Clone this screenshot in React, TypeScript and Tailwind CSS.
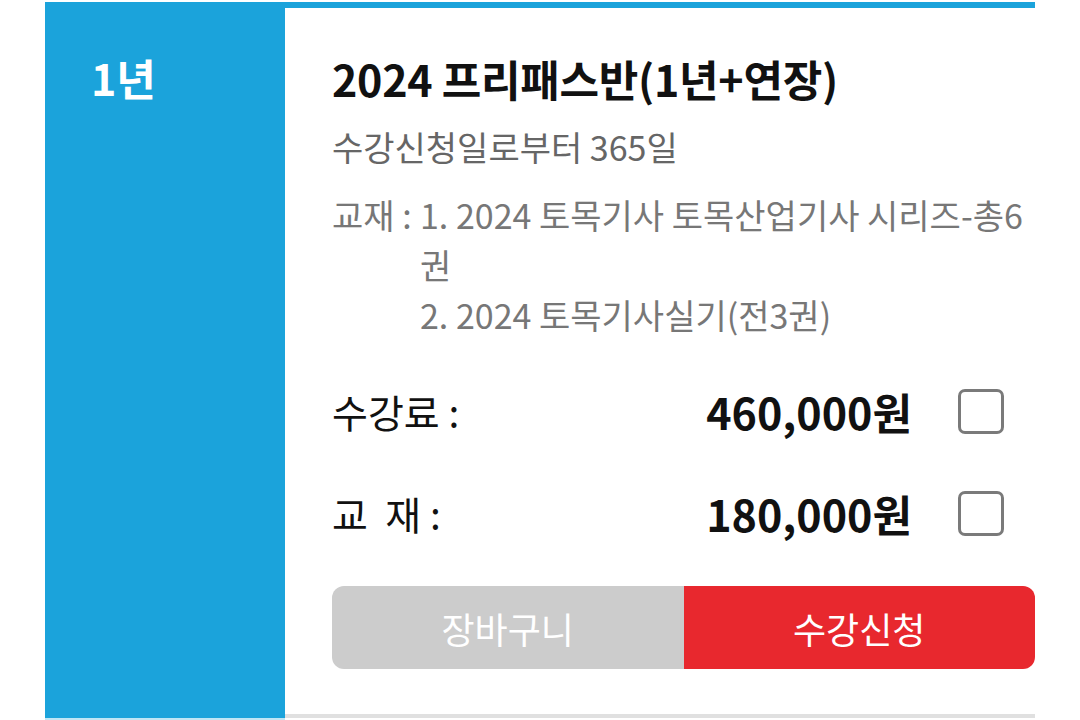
export default function App() {
  const font = { fontFamily: '"Noto Sans CJK KR", "Noto Sans", sans-serif' };
  return (
    <div className="w-[1080px] h-[720px] bg-white overflow-hidden" style={font}>
      <div className="pt-[2px] pl-[45px]">
        {/* course option */}
        <div className="flex w-[990px] border-t-[6px] border-[#1ba3db]">
          <div className="w-[240px] shrink-0 bg-[#1ba3db] pl-[46px] pt-[43px]">
            <span className="text-[43px] font-bold leading-[52px] text-white">1년</span>
          </div>
          <div className="flex-1 border-b-4 border-[#e0e0e0] pl-[47px] pt-[44px] pb-[45px]">
            <h2 className="text-[43px] font-bold leading-[52px] text-[#111] tracking-[-0.3px]">
              2024 프리패스반(1년+연장)
            </h2>
            <p className="mt-[21px] text-[34px] leading-[44px] text-[#666]">수강신청일로부터 365일</p>
            <div className="mt-[21px] flex text-[34px] leading-[50px] text-[#777]">
              <span className="w-[88px] shrink-0">교재 :</span>
              <div>
                <p>1. 2024 토목기사 토목산업기사 시리즈-총6</p>
                <p>권</p>
                <p>2. 2024 토목기사실기(전3권)</p>
              </div>
            </div>
            <div className="mt-[47px] flex items-center h-[48px] pr-[31px]">
              <span className="flex-1 text-[39px] leading-[48px] text-[#111]">수강료&nbsp;:</span>
              <span className="text-[43px] font-bold leading-[48px] text-[#111]">460,000원</span>
              <span className="ml-[46px] w-[46px] h-[45px] rounded-[7px] border-[3px] border-[#7a7a7a]" />
            </div>
            <div className="mt-[54px] flex items-center h-[48px] pr-[31px]">
              <span className="flex-1 text-[39px] leading-[48px] text-[#111]">교&nbsp;&nbsp;재&nbsp;:</span>
              <span className="text-[43px] font-bold leading-[48px] text-[#111]">180,000원</span>
              <span className="ml-[46px] w-[46px] h-[45px] rounded-[7px] border-[3px] border-[#7a7a7a]" />
            </div>
            <div className="mt-[49px] flex h-[83px]">
              <button className="flex-1 rounded-l-[12px] bg-[#cccccc] text-[36px] text-white">장바구니</button>
              <button className="flex-1 rounded-r-[12px] bg-[#e8282e] text-[36px] text-white">수강신청</button>
            </div>
          </div>
        </div>
        <div className="flex w-[990px]">
          <div className="w-[240px] h-[2px] bg-[#bfe6f5]" />
        </div>
        <div className="w-[990px] h-[10px] bg-[#1ba3db]" />
      </div>
    </div>
  );
}
